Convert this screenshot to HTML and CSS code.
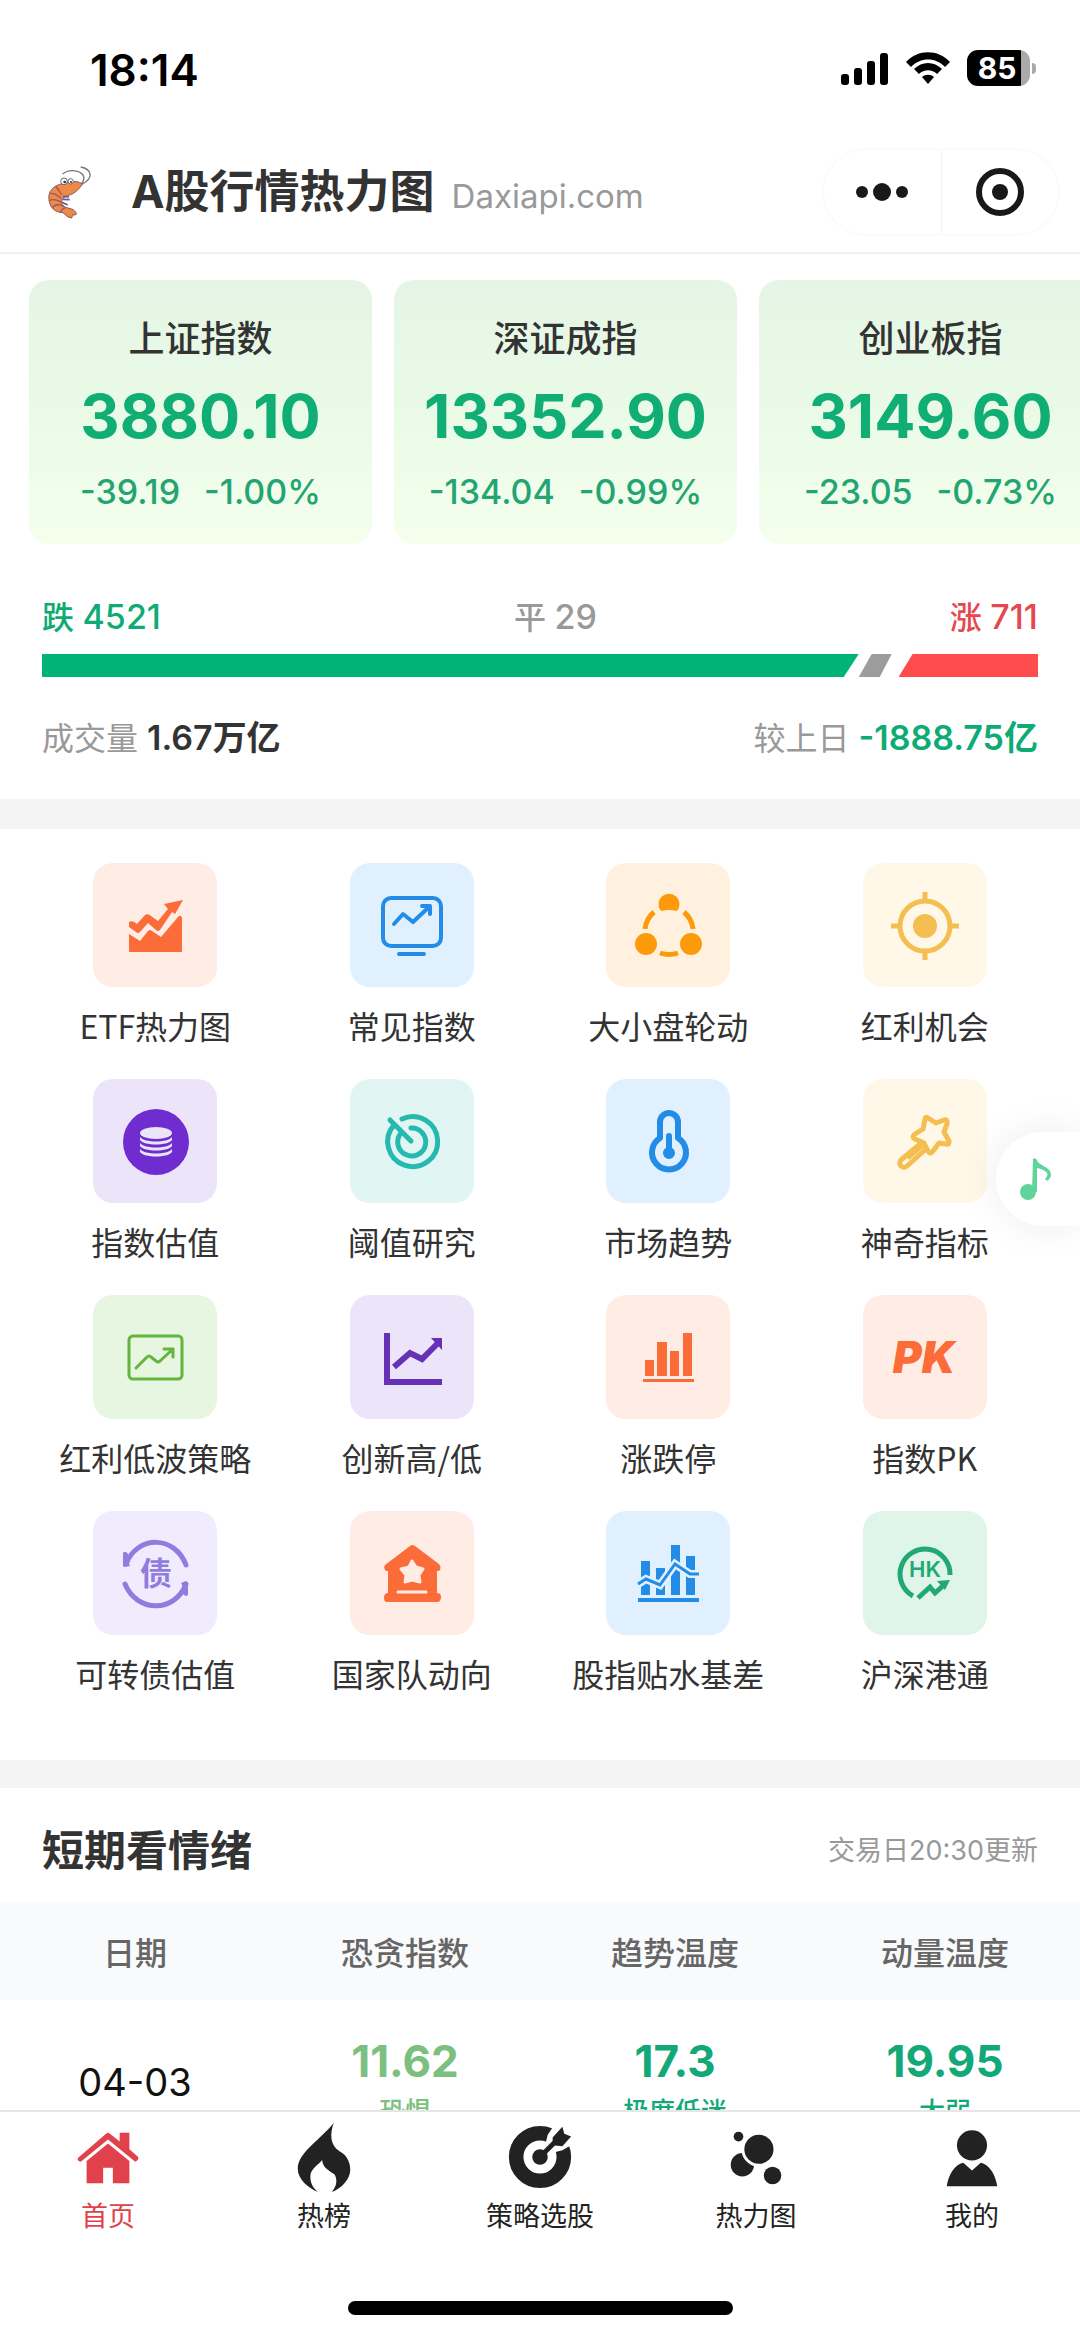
FILE: index.html
```html
<!DOCTYPE html>
<html lang="zh-CN">
<head>
    <meta charset="UTF-8" />
    <meta name="viewport" content="width=device-width, initial-scale=1" />
    <title>A股行情热力图</title>
    <link rel="stylesheet" href="styles.css">
</head>
<body>
    <!-- Status bar -->
    <div class="status">
        <span class="time">18:14</span>
        <div class="status-icons">
            <svg width="48" height="34" viewBox="0 0 48 34">
                <rect x="0" y="23" width="8" height="11" rx="3"/>
                <rect x="13" y="17" width="8" height="17" rx="3"/>
                <rect x="26" y="10" width="8" height="24" rx="3"/>
                <rect x="39" y="2" width="8" height="32" rx="3"/>
            </svg>
            <svg width="46" height="34" viewBox="0 0 46 34">
                <path d="M1 11C13 -2 33 -2 45 11L40 16C31 6 15 6 6 16Z"/>
                <path d="M9 18C17 10 29 10 37 18L32 23C27 18 19 18 14 23Z"/>
                <path d="M17 26C20 23 26 23 29 26L23 33Z"/>
            </svg>
            <div class="battery"><span>85</span></div>
        </div>
    </div>

    <!-- Header -->
    <header class="header">
        <svg class="logo" width="46" height="54" viewBox="50 64 138 162">
            <path d="M97 91C120 72 165 82 160 108C159 115 155 120 150 123M151 70C184 76 192 104 154 122" fill="none" stroke="#777" stroke-width="4"/>
            <path d="M156 122C148 112 120 110 98 120C68 124 52 146 56 168C58 192 74 206 98 207C104 212 112 222 124 223C127 218 126 214 126 213C132 215 137 214 139 210C134 202 130 198 124 196C112 192 96 192 94 176C92 164 104 158 118 154C136 148 146 136 156 122Z" fill="#ee8a48" stroke="#8a5560" stroke-width="3"/>
            <path d="M76 129C84 134 88 146 94 153M60 149C72 148 84 156 92 164M56 171C70 164 82 170 94 176M66 192C74 182 88 182 100 188M92 206C92 198 98 194 106 192" fill="none" stroke="#9a5560" stroke-width="4"/>
            <path d="M98 158L116 160M96 167L118 168M95 176L112 184" stroke="#665a88" stroke-width="5"/>
            <circle cx="101" cy="113" r="10" fill="#fff" stroke="#666" stroke-width="3"/>
            <circle cx="121" cy="113" r="8" fill="#fff" stroke="#666" stroke-width="3"/>
            <circle cx="103" cy="115" r="4" fill="#333"/>
            <circle cx="122" cy="115" r="3" fill="#333"/>
        </svg>
        <h1>A股行情热力图</h1>
        <span class="domain">Daxiapi.com</span>
        <div class="capsule">
            <button aria-label="更多">
                <svg width="54" height="20" viewBox="0 0 54 20"><circle cx="7" cy="10" r="6"/><circle cx="27" cy="10" r="9"/><circle cx="47" cy="10" r="6"/></svg>
            </button>
            <button aria-label="关闭">
                <svg width="50" height="50" viewBox="0 0 50 50"><circle cx="25" cy="25" r="21" fill="none" stroke="#191919" stroke-width="6"/><circle cx="25" cy="25" r="8"/></svg>
            </button>
        </div>
    </header>

    <main>
        <!-- Index cards -->
        <div class="cards">
            <div class="card">
                <h2>上证指数</h2>
                <b>3880.10</b>
                <p><span>-39.19</span><span>-1.00%</span></p>
            </div>
            <div class="card">
                <h2>深证成指</h2>
                <b>13352.90</b>
                <p><span>-134.04</span><span>-0.99%</span></p>
            </div>
            <div class="card">
                <h2>创业板指</h2>
                <b>3149.60</b>
                <p><span>-23.05</span><span>-0.73%</span></p>
            </div>
        </div>

        <!-- Up / down counts -->
        <section class="market">
            <div class="row counts">
                <span class="down">跌 <em>4521</em></span>
                <span>平 <em>29</em></span>
                <span class="up">涨 <em>711</em></span>
            </div>
            <div class="bar">
                <div class="bar-down" style="width: 82%"></div>
                <div class="bar-flat"></div>
                <div class="bar-up" style="width: 14%"></div>
            </div>
            <div class="row">
                <span>成交量 <b>1.67万亿</b></span>
                <span>较上日 <b class="down">-1888.75亿</b></span>
            </div>
        </section>

        <!-- Feature menu -->
        <nav class="menu">
            <a href="#etf">
                <svg class="tile orange" viewBox="0 0 124 124">
                    <path d="M36 59Q40 57 44 61L52 52Q55 50 58 53L65 58L75 46L71 41L90 37L82 51L79 49L67 67Q65 69 63 67L55 60L47 69Q45 71 43 69L36 64Z"/>
                    <path d="M36 71L47 78L55 68Q57 66 59 68L68 74L85 54Q88 51 89 55V88Q89 89 88 89H37Q36 89 36 88Z"/>
                </svg>
                <span>ETF热力图</span>
            </a>
            <a href="#index">
                <svg class="tile blue line" viewBox="0 0 124 124" stroke-width="4">
                    <rect x="33" y="35" width="58" height="48" rx="8"/>
                    <path d="M44 61L53 51L63 59L79 44M72 43H80V51M49 91H74"/>
                </svg>
                <span>常见指数</span>
            </a>
            <a href="#rotation">
                <svg class="tile amber" viewBox="0 0 124 124">
                    <path d="M55 48A10.500 10.500 0 1 1 71 48Q63 46 55 48Z"/>
                    <circle cx="40" cy="81" r="11"/>
                    <circle cx="85" cy="81" r="11"/>
                    <path d="M39 66Q40 56 48 49M87 66Q86 56 78 49M54 90Q63 93 72 90" fill="none" stroke="currentColor" stroke-width="5"/>
                </svg>
                <span>大小盘轮动</span>
            </a>
            <a href="#dividend">
                <svg class="tile yellow" viewBox="0 0 124 124">
                    <circle cx="62" cy="63" r="12"/>
                    <g fill="none" stroke="currentColor" stroke-width="5">
                        <circle cx="62" cy="63" r="25"/>
                        <path d="M62 29V38M62 88V97M28 63H37M87 63H96"/>
                    </g>
                </svg>
                <span>红利机会</span>
            </a>

            <a href="#valuation">
                <svg class="tile purple" viewBox="0 0 124 124">
                    <circle cx="63" cy="63" r="33"/>
                    <g fill="#ece4f8">
                        <ellipse cx="63" cy="54" rx="16" ry="6"/>
                        <path d="M47 58C51 64 75 64 79 58V61C75 67 51 67 47 61Z"/>
                        <path d="M47 64C51 70 75 70 79 64V67C75 73 51 73 47 67Z"/>
                        <path d="M47 70C51 76 75 76 79 70V73C75 79 51 79 47 73Z"/>
                    </g>
                </svg>
                <span>指数估值</span>
            </a>
            <a href="#threshold">
                <svg class="tile teal line" viewBox="0 0 124 124" stroke-width="5">
                    <path d="M52 40A25 25 0 1 1 44 46M61 49A14 14 0 1 1 51 54M40 41L61 62"/>
                </svg>
                <span>阈值研究</span>
            </a>
            <a href="#trend">
                <svg class="tile blue line" viewBox="0 0 124 124" stroke-width="6">
                    <path d="M54 59V43A8 8 0 0 1 72 43V59A17 17 0 1 1 54 59ZM63 57V72"/>
                    <circle cx="63" cy="74" r="3"/>
                </svg>
                <span>市场趋势</span>
            </a>
            <a href="#magic">
                <svg class="tile yellow line" viewBox="0 0 124 124" stroke-width="5">
                    <path d="M62 40Q62 37 65 39L73 44L81 41Q85 40 84 45L81 53L86 62Q87 66 83 65L76 64L70 72Q67 76 65 72L61 64L52 60Q48 58 52 55L60 50Z"/>
                    <path d="M57 65L38 81A4 4 0 0 0 44 87L63 70"/>
                    <path d="M46 79L60 67" stroke-width="3"/>
                </svg>
                <span>神奇指标</span>
            </a>

            <a href="#lowvol">
                <svg class="tile green line" viewBox="0 0 124 124" stroke-width="3">
                    <rect x="36" y="41" width="53" height="43" rx="4"/>
                    <path d="M43 73L54 62Q56 60 58 62L63 66Q65 68 67 66L80 54M71 54H80V62"/>
                </svg>
                <span>红利低波策略</span>
            </a>
            <a href="#highlow">
                <svg class="tile violet" viewBox="0 0 124 124">
                    <path d="M34 38H40V84H92V90H34ZM81 43H92V55Z"/>
                    <path d="M44 72L60 58L72 64L88 48" fill="none" stroke="currentColor" stroke-width="6"/>
                </svg>
                <span>创新高/低</span>
            </a>
            <a href="#limit">
                <svg class="tile orange" viewBox="0 0 124 124">
                    <path d="M39 65H48V81H39ZM51 47H61V81H51ZM64 56H73V81H64ZM77 38H86V81H77ZM37 84H88V87H37Z"/>
                </svg>
                <span>涨跌停</span>
            </a>
            <a href="#pk">
                <svg class="tile orange" viewBox="0 0 124 124">
                    <text class="pk" x="61" y="78" text-anchor="middle">PK</text>
                </svg>
                <span>指数PK</span>
            </a>

            <a href="#bond">
                <svg class="tile lilac" viewBox="0 0 124 124">
                    <path d="M33 53C44 24 82 24 93 54M93 73C82 102 44 102 32 73" fill="none" stroke="currentColor" stroke-width="5" stroke-linecap="round"/>
                    <path d="M30 42Q32 39 35 43V50L37 55L31 56Q30 56 30 54ZM95 83Q94 87 90 83V76L88 72L93 70L95 73Z"/>
                    <text class="zhai" x="63" y="74" text-anchor="middle">债</text>
                </svg>
                <span>可转债估值</span>
            </a>
            <a href="#team">
                <svg class="tile orange" viewBox="0 0 124 124">
                    <path d="M60 35Q62 33 65 35L89 53Q92 57 89 60H87V82Q91 82 91 86Q91 91 87 91H37Q34 91 34 87Q34 82 38 82V60H36Q33 57 35 54Z"/>
                    <path d="M62 50L66 56L73 58L69 64L70 71L62 69L55 71L56 64L51 58L59 56Z" fill="#feece5" stroke="#feece5" stroke-width="3" stroke-linejoin="round"/>
                    <path d="M48 81H76" stroke="#feece5" stroke-width="3" stroke-linecap="round"/>
                </svg>
                <span>国家队动向</span>
            </a>
            <a href="#basis">
                <svg class="tile blue" viewBox="0 0 124 124">
                    <path d="M35 50H44V84H35ZM50 57H59V84H50ZM65 34H74V84H65ZM80 45H89V84H80ZM32 87H93V91H32Z"/>
                    <path d="M32 73L40 68L54 74L69 53L84 63H93" fill="none" stroke="#e1f0ff" stroke-width="8"/>
                    <path d="M32 73L40 68L54 74L69 53L84 63H93" fill="none" stroke="currentColor" stroke-width="3"/>
                </svg>
                <span>股指贴水基差</span>
            </a>
            <a href="#hk">
                <svg class="tile mint" viewBox="0 0 124 124">
                    <path d="M87 64A25 25 0 1 0 50 85M55 87L67 76L72 82L82 73" fill="none" stroke="currentColor" stroke-width="5"/>
                    <path d="M74 70L87 69L82 79Z"/>
                    <text class="hk" x="62" y="66" text-anchor="middle">HK</text>
                </svg>
                <span>沪深港通</span>
            </a>
        </nav>

        <!-- Sentiment -->
        <section class="mood">
            <div class="mood-head">
                <h2>短期看情绪</h2>
                <span>交易日20:30更新</span>
            </div>
            <table>
                <thead>
                    <tr><th>日期</th><th>恐贪指数</th><th>趋势温度</th><th>动量温度</th></tr>
                </thead>
                <tbody>
                    <tr>
                        <td>04-03</td>
                        <td class="fear"><b>11.62</b><small>恐惧</small></td>
                        <td class="down"><b>17.3</b><small>极度低迷</small></td>
                        <td class="down"><b>19.95</b><small>太弱</small></td>
                    </tr>
                </tbody>
            </table>
        </section>
    </main>

    <button class="music" aria-label="音乐">
        <svg width="32" height="42" viewBox="0 0 32 42">
            <circle cx="8" cy="34" r="8"/>
            <path d="M13 1Q15 -1 17 2C18 8 31 8 31 17Q31 20 27 23L25 21C31 15 25 12 17 10V34H12Z"/>
        </svg>
    </button>

    <!-- Tab bar -->
    <footer>
        <nav class="tabs">
            <a class="active" href="#home">
                <svg viewBox="0 0 72 72">
                    <path d="M34 12Q36 10 38 12L48 20V11H58V28L67 36Q68 39 64 41L36 18L8 41Q4 40 5 37Z"/>
                    <path d="M36 22L58 40V63H41V47H31V63H14V40Z"/>
                </svg>
                首页
            </a>
            <a href="#hot">
                <svg viewBox="0 0 72 72">
                    <path d="M46 1C42 12 42 24 52 30C60 34 63 42 63 49C63 59 54 68 44 72C49 66 50 60 47 54C42 50 35 48 34 39C31 44 21 48 22 57C22 64 26 69 30 72C20 68 9 59 9 48C9 32 30 20 46 1Z"/>
                </svg>
                热榜
            </a>
            <a href="#strategy">
                <svg viewBox="0 0 72 72">
                    <circle cx="36" cy="36" r="24.500" fill="none" stroke="currentColor" stroke-width="15"/>
                    <path d="M42 21L44 13L50 4L62 -2L76 14L66 25L59 29L51 31L44 30Z" fill="#fff"/>
                    <circle cx="36" cy="36" r="8"/>
                    <path d="M36 36L54 18" stroke="currentColor" stroke-width="5"/>
                    <path d="M49 16L59 5L61 12L68 15L59 25L49 24Z"/>
                </svg>
                策略选股
            </a>
            <a href="#heat">
                <svg viewBox="0 0 72 72">
                    <circle cx="22" cy="44" r="12"/>
                    <circle cx="39" cy="28" r="18" fill="#fff"/>
                    <circle cx="39" cy="28" r="15"/>
                    <circle cx="18" cy="15" r="5"/>
                    <circle cx="53" cy="55" r="9"/>
                </svg>
                热力图
            </a>
            <a href="#me">
                <svg viewBox="0 0 72 72">
                    <circle cx="36" cy="24" r="15.500"/>
                    <path d="M10 66C12 54 18 44 27 42L36 50L45 42C54 44 60 54 62 66Z"/>
                </svg>
                我的
            </a>
        </nav>
        <div class="home-line"></div>
    </footer>
</body>
</html>
```

FILE: styles.css
```css
* { box-sizing: border-box; margin: 0; padding: 0; }

body {
    display: flex;
    flex-direction: column;
    height: 100vh;
    overflow: hidden;
    background-color: #fff;
    color: #333;
    font-family: Inter, "Noto Sans CJK SC", sans-serif;
    font-size: 32px;
    line-height: 40px;
}

a { color: inherit; text-decoration: none; }
button { border: none; background: none; cursor: pointer; }
.down { color: #0fab74; }
.up { color: #e5484f; }

/* Status bar */
.status {
    display: flex;
    justify-content: space-between;
    align-items: flex-start;
    padding: 50px 50px 0 90px;
    height: 132px;
    flex-shrink: 0;
    color: #000;
}
.time { font-size: 44px; font-weight: 600; }
.status-icons {
    display: flex;
    align-items: center;
    gap: 16px;
}
.battery {
    position: relative;
    width: 63px;
    height: 36px;
    border-radius: 11px;
    background: linear-gradient(to right, #000 54px, #aaa 54px);
    color: #fff;
    font-size: 30px;
    font-weight: 700;
    line-height: 36px;
    text-align: center;
    padding-right: 3px;
}
.battery::after {
    content: "";
    position: absolute;
    right: -6px;
    top: 13px;
    width: 4px;
    height: 11px;
    border-radius: 0 4px 4px 0;
    background-color: #aaa;
}

/* Header */
.header {
    display: flex;
    align-items: baseline;
    height: 122px;
    flex-shrink: 0;
    padding: 0 20px 0 47px;
    border-bottom: 2px solid #f2f2f2;
    line-height: 120px;
}
.logo { align-self: center; margin-right: 38px; }
.header h1 { font-size: 45px; font-weight: 700; margin-right: 17px; }
.domain { font-size: 33px; color: #999; }
.capsule {
    display: flex;
    align-self: center;
    margin-left: auto;
    width: 238px;
    height: 88px;
    border: 2px solid #fbfbfb;
    border-radius: 44px;
}
.capsule button {
    flex: 1;
    display: flex;
    align-items: center;
    justify-content: center;
}
.capsule button + button { border-left: 1px solid #f2f2f2; }
.capsule svg { fill: #191919; }

main {
    flex: 1;
    min-height: 0;
    overflow: hidden;
}

/* Index cards */
.cards {
    display: flex;
    gap: 22px;
    padding: 26px 29px 48px;
    overflow: hidden;
}
.card {
    flex: 0 0 343px;
    height: 264px;
    padding-top: 35px;
    border-radius: 20px;
    background: linear-gradient(#e5f5e5, #e9fbe7 50%, #f4ffec);
    text-align: center;
}
.card h2 { font-size: 36px; font-weight: 500; line-height: 48px; }
.card b {
    display: block;
    font-size: 61px;
    line-height: 72px;
    margin-top: 17px;
    color: #10ad74;
}
.card p {
    display: flex;
    justify-content: center;
    gap: 24px;
    margin-top: 20px;
    font-size: 34px;
    font-weight: 500;
    color: #25a473;
}

/* Up / down */
.market {
    padding: 5px 42px 40px;
    border-bottom: 30px solid #f4f4f4;
    color: #999;
}
.row { display: flex; justify-content: space-between; }
.row b { font-size: 34px; font-weight: 600; color: #333; }
.row b.down { color: #0fab74; }
.counts { font-weight: 500; }
.counts em { font-size: 34px; font-style: normal; }
.bar {
    display: flex;
    height: 23px;
    margin: 16px 0 41px;
}
.bar-down {
    background-color: #00b478;
    clip-path: polygon(0 0, 100% 0, calc(100% - 15px) 100%, 0 100%);
}
.bar-flat {
    flex: 1;
    background-color: #9c9c9c;
    clip-path: polygon(13px 0, 33px 0, 21px 100%, 0 100%);
}
.bar-up {
    background-color: #fd4b4e;
    clip-path: polygon(14px 0, 100% 0, 100% 100%, 0 100%);
}

/* Feature menu */
.menu {
    display: grid;
    grid-template-columns: repeat(4, 1fr);
    row-gap: 34px;
    padding: 34px 27px 67px;
    border-bottom: 28px solid #f4f4f4;
}
.menu a {
    display: flex;
    flex-direction: column;
    align-items: center;
    gap: 18px;
    white-space: nowrap;
}
.menu a span { font-family: "Noto Sans CJK SC", sans-serif; }
.tile {
    width: 124px;
    height: 124px;
    border-radius: 20px;
    fill: currentColor;
}
.tile.line {
    fill: none;
    stroke: currentColor;
    stroke-linecap: round;
    stroke-linejoin: round;
}
.orange { color: #fb6c38; background-color: #feece5; }
.blue { color: #238ce6; background-color: #e1f0ff; }
.amber { color: #fd9a0c; background-color: #fff1de; }
.yellow { color: #f4be50; background-color: #fff8e8; }
.purple { color: #6f2dd0; background-color: #ece4f8; }
.violet { color: #6631b4; background-color: #ece4f8; }
.teal { color: #25b9b0; background-color: #e1f6f3; }
.green { color: #63b53d; background-color: #e6f6e1; }
.lilac { color: #917bdf; background-color: #f0ecfe; }
.mint { color: #22a873; background-color: #dff5ea; }
.pk { font-size: 44px; font-weight: 900; font-style: italic; }
.zhai { font-size: 32px; font-weight: 700; }
.hk { font-size: 22px; font-weight: 600; }

/* Sentiment */
.mood-head {
    display: flex;
    justify-content: space-between;
    align-items: center;
    height: 114px;
    padding: 12px 42px 0;
}
.mood-head h2 { font-size: 42px; font-weight: 700; }
.mood-head span { font-size: 27px; color: #999; }
table {
    width: 100%;
    table-layout: fixed;
    border-collapse: collapse;
    text-align: center;
}
th {
    height: 98px;
    padding-top: 6px;
    background-color: #f9fafb;
    color: #666;
    font-weight: 500;
}
td {
    padding-top: 33px;
    vertical-align: middle;
    font-size: 38px;
    color: #111;
}
td b { display: block; font-size: 44px; line-height: 56px; }
td small { display: block; font-size: 26px; line-height: 38px; font-weight: 500; margin-top: 4px; }
td.fear { color: #7dbf7f; }
td.down { color: #13a877; }

/* Floating music button */
.music {
    position: fixed;
    right: 0;
    top: 1132px;
    width: 84px;
    height: 94px;
    padding-left: 24px;
    border-radius: 47px 0 0 47px;
    background-color: #fff;
    box-shadow: 0 0 40px rgba(0, 0, 0, 0.08);
}
.music svg { display: block; fill: #63d39c; }

/* Tab bar */
footer {
    flex-shrink: 0;
    border-top: 2px solid #e6e6e6;
    padding: 10px 0 22px;
    background-color: #fff;
}
.tabs { display: flex; }
.tabs a {
    flex: 1;
    display: flex;
    flex-direction: column;
    align-items: center;
    font-family: "Noto Sans CJK SC", sans-serif;
    font-size: 27px;
    line-height: 46px;
    color: #222;
}
.tabs svg { width: 70px; height: 70px; fill: currentColor; }
.tabs a.active { color: #e0414a; }
.home-line {
    width: 385px;
    height: 14px;
    margin: 63px auto 0;
    border-radius: 7px;
    background-color: #000;
}
```
